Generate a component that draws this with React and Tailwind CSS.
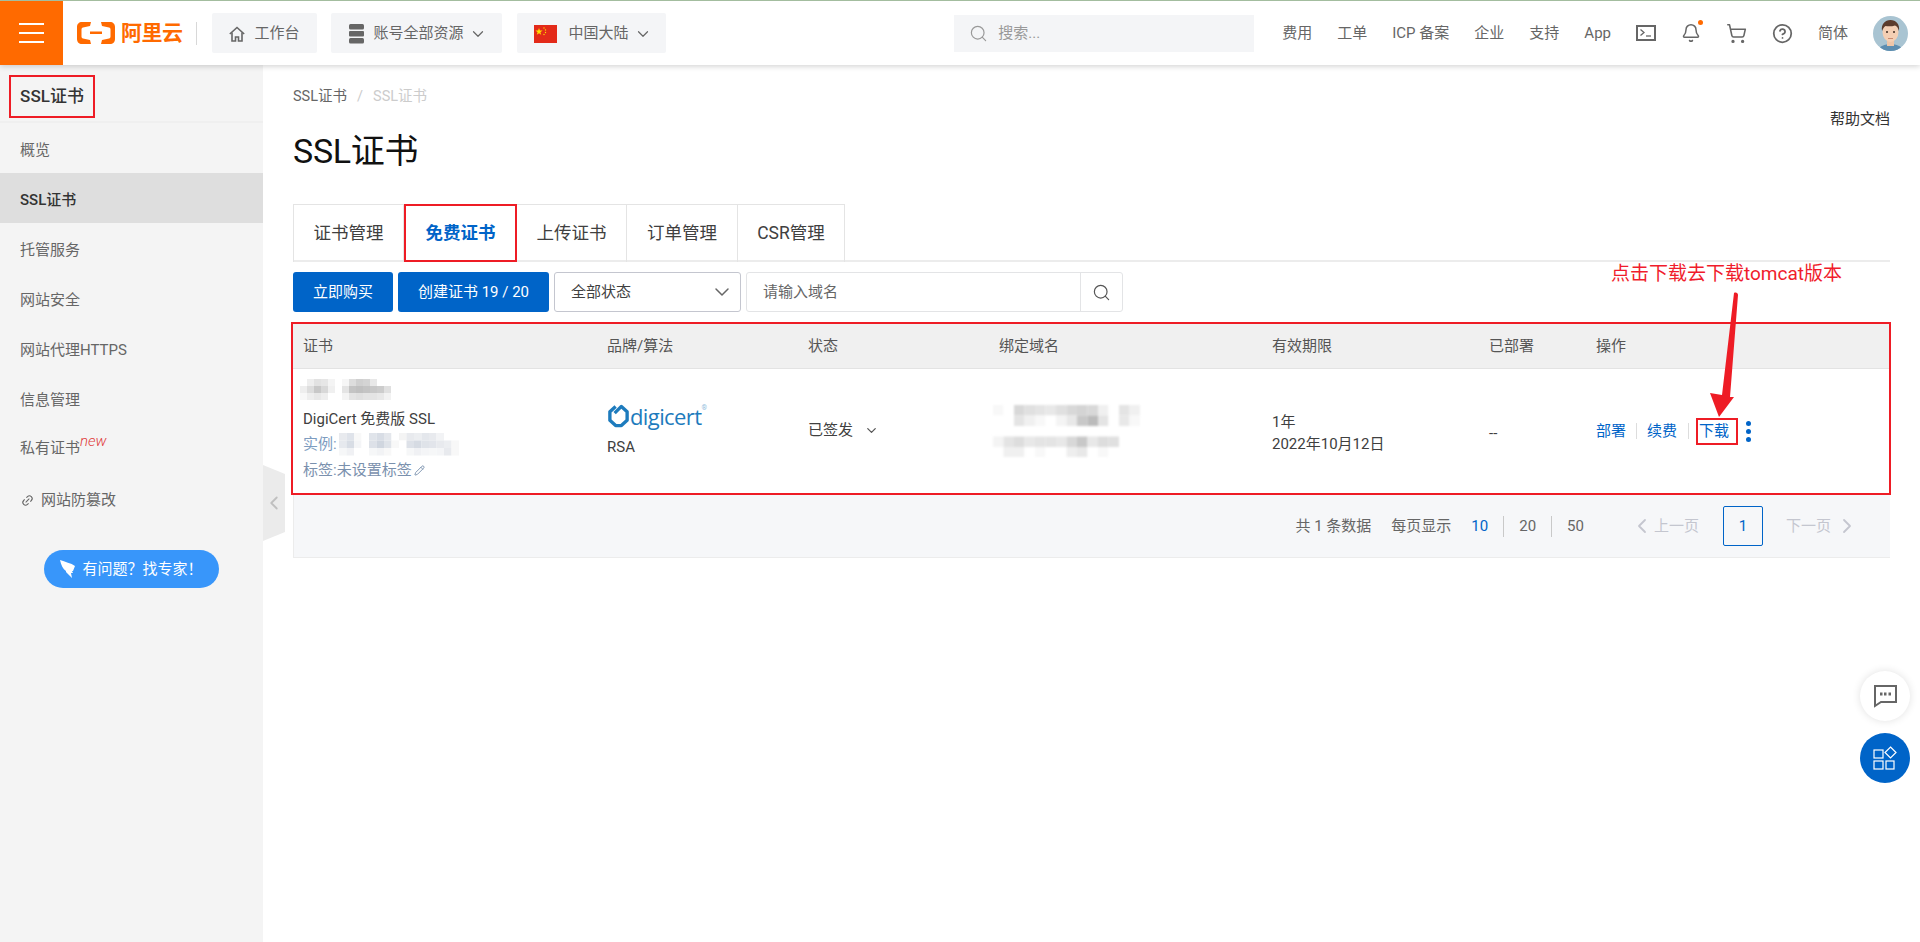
// App.jsx - SSL证书 控制台页面
import React from 'react';
import { Search, ChevronDown, ChevronLeft, ChevronRight, Bell, ShoppingCart, CircleHelp, Link2, Pencil } from 'lucide-react';

const sideItems = ['概览', 'SSL证书', '托管服务', '网站安全', '网站代理HTTPS', '信息管理'];
const navLinks = ['费用', '工单', 'ICP 备案', '企业', '支持', 'App'];
const tabs = [
  { label: '证书管理', width: 'w-[111px]' },
  { label: '免费证书', width: 'w-[113px]', active: true },
  { label: '上传证书', width: 'w-[110px]' },
  { label: '订单管理', width: 'w-[111px]' },
  { label: 'CSR管理', width: 'w-[107px]' },
];
const columns = ['证书', '品牌/算法', '状态', '绑定域名', '有效期限', '已部署', '操作'];

// 打码区域: 每行一串灰度
const nameCells = [
  'fff,eee,e2e2e2,e6e6e6,f4f4f4,fff,f6f6f6,ddd,d0d0d0,d4d4d4,e8e8e8,fff,fff',
  'eee,ddd,c8c8c8,d8d8d8,f0f0f0,fff,e4e4e4,c4c4c4,c0c0c0,c4c4c4,c8c8c8,ccc,e0e0e0',
  'f8f8f8,eee,e8e8e8,eee,fff,fff,f4f4f4,e4e4e4,e0e0e0,e4e4e4,e4e4e4,e8e8e8,f2f2f2',
];
const instanceCells = [
  'e8eaee,dfe3ea,f8f8f8,fff,e0e4ea,d8dde5,e4e7ec,fff,f4f4f4,e8eaee,eceef1,e4e7ec,e8eaee,f2f3f5,fff,fff',
  'e6e9ee,d8dde5,f4f5f7,fff,dde1e8,d0d6df,dfe3e9,f8f8f8,fff,dde1e8,d6dbe3,dfe3e9,e2e5eb,e8eaee,eceef1,f8f8f8',
  'f6f7f8,f0f1f4,fff,fff,f6f7f8,f2f3f5,f8f8f8,fff,fff,f6f7f8,f0f1f4,f4f5f7,f6f7f8,f4f5f7,e8eaee,f8f8f8',
];
const domainCells = [
  'f8f8f8,fff,d8d8d8,e0e0e0,e4e4e4,e8e8e8,e0e0e0,d8d8d8,d4d4d4,d8d8d8,f0f0f0,fff,e4e4e4,f0f0f0',
  'fff,fff,e4e4e4,f0f0f0,f8f8f8,fff,f4f4f4,e8e8e8,c8c8c8,bbb,e4e4e4,fff,e8e8e8,f8f8f8',
  'fff,fff,fff,fff,fff,fff,fff,fff,fff,fff,fff,fff,fff,fff',
  'f4f4f4,e4e4e4,ddd,e8e8e8,e4e4e4,e4e4e4,e8e8e8,d8d8d8,c8c8c8,e8e8e8,ddd,e0e0e0,fff,fff',
  'fff,f0f0f0,f0f0f0,fff,f8f8f8,fff,fff,eee,e8e8e8,fff,f8f8f8,fff,fff,fff',
];

function Mosaic({ rows, cell = 7, className }) {
  const grid = rows.map((r) => r.split(','));
  return (
    <svg width={grid[0].length * cell} height={grid.length * cell} className={className}>
      {grid.map((row, y) =>
        row.map((c, x) => (
          <rect key={`${x}-${y}`} x={x * cell} y={y * cell} width={cell} height={cell} fill={`#${c}`} />
        ))
      )}
    </svg>
  );
}

function AliLogo() {
  return (
    <div className="flex items-center">
      <svg width="38" height="24" viewBox="0 0 38 24" fill="#ff6a00">
        <path d="M5 1h9l-1 4-7 1.500c-1 .3-1.500 1-1.500 2v7c0 1 .5 1.700 1.500 2l7 1.500 1 4H5c-3 0-5-2-5-5V6c0-3 2-5 5-5z" />
        <path d="M33 1h-9l1 4 7 1.500c1 .3 1.500 1 1.500 2v7c0 1-.5 1.700-1.500 2l-7 1.500-1 4h9c3 0 5-2 5-5V6c0-3-2-5-5-5z" />
        <rect x="13" y="10.500" width="12" height="2.500" />
      </svg>
      <span className="ml-[6px] text-[21px] leading-none font-bold text-[#ff6a00] tracking-[-0.5px]">阿里云</span>
    </div>
  );
}

function HomeIcon() {
  return (
    <svg width="16" height="16" viewBox="0 0 16 16" fill="none" stroke="#666" strokeWidth="1.600">
      <path d="M.8 8 8 1.500 15.200 8" />
      <path d="M3 6.500V15h3.500v-4h3v4H13V6.500" />
    </svg>
  );
}

function ServerIcon() {
  return (
    <svg width="15" height="20" viewBox="0 0 15 20" fill="#666">
      <rect width="15" height="5.500" rx="1.500" />
      <rect y="7" width="15" height="5.500" rx="1" />
      <rect y="14" width="15" height="5.500" rx="1.500" />
    </svg>
  );
}

function Flag() {
  return (
    <svg width="23" height="18" viewBox="0 0 23 18">
      <rect width="23" height="18" fill="#e32a19" />
      <path d="m5 3 .9 2.600h2.700L6.400 7.200l.8 2.600L5 8.200 2.800 9.800l.8-2.600-2.200-1.600h2.700z" fill="#ffde00" />
      <circle cx="10" cy="3" r=".7" fill="#ffde00" />
      <circle cx="11.500" cy="5" r=".7" fill="#ffde00" />
      <circle cx="11.500" cy="7.500" r=".7" fill="#ffde00" />
      <circle cx="10" cy="9.500" r=".7" fill="#ffde00" />
    </svg>
  );
}

function TerminalIcon() {
  return (
    <svg width="20" height="16" viewBox="0 0 20 16" fill="none" stroke="#666">
      <rect x="1" y="1" width="18" height="14" strokeWidth="2" />
      <path d="m4.500 4.500 3.500 3-3.500 3" strokeWidth="1.300" />
      <path d="M10 11h5" strokeWidth="1.300" />
    </svg>
  );
}

function Avatar() {
  return (
    <svg width="35" height="35" viewBox="0 0 35 35" className="rounded-full">
      <rect width="35" height="35" fill="#a9c4d2" />
      <path d="M5 35c1-5 7-7 12.500-7s11.500 2 12.500 7z" fill="#5d8db0" />
      <rect x="14" y="23" width="7" height="7" fill="#eec5a8" />
      <ellipse cx="17.500" cy="16" rx="8" ry="10" fill="#f4cfb4" />
      <path d="M9 15c-1-7 3-11 8.500-11S27 8 26 15c-1-3-2-5-4-5.500-3 1-7 1-9.500.500-2 1-2.500 3-3.500 5z" fill="#5b3b2c" />
      <circle cx="14" cy="16" r="1" fill="#3c2a20" />
      <circle cx="21" cy="16" r="1" fill="#3c2a20" />
      <path d="M15 22.500h5" stroke="#c98a70" />
    </svg>
  );
}

function DigicertLogo() {
  return (
    <div className="flex items-center text-[#1d7bbd]">
      <svg width="23" height="24" viewBox="0 0 24 24" fill="none" stroke="#1d7bbd" strokeWidth="3.500">
        <path d="M9 2 3 7.500v9L9 22h6l6-5.500v-9L15 2 8 9" strokeLinejoin="round" />
      </svg>
      <span className="text-[22px] leading-none font-['Open_Sans',sans-serif] tracking-[-0.6px]">digicert</span>
      <span className="self-start -mt-[1px] text-[7px] text-[#8fbcdc]">®</span>
    </div>
  );
}

export default function App() {
  return (
    <div className="relative h-[942px] overflow-hidden bg-white font-['Roboto','Noto_Sans_CJK_SC',sans-serif] text-[15px] text-[#404040]">
      {/* 顶部导航 */}
      <header className="relative z-10 flex h-[65px] items-center border-t border-t-[#a3bd9f] bg-white pr-[12px] shadow-[0_1px_6px_rgba(0,0,0,0.2)]">
        <button className="flex h-full w-[63px] flex-col items-center justify-center gap-[7px] bg-[#ff6a00]">
          <span className="h-[2px] w-[25px] bg-white" />
          <span className="h-[2px] w-[25px] bg-white" />
          <span className="h-[2px] w-[25px] bg-white" />
        </button>
        <div className="ml-[14px]">
          <AliLogo />
        </div>
        <div className="ml-[13px] mr-[15px] h-[23px] w-px bg-[#d8d8d8]" />
        <div className="flex h-[40px] w-[105px] items-center gap-[10px] rounded-[2px] bg-[#f4f5f7] pl-[17px] pt-[1px] text-[#666]">
          <HomeIcon />
          工作台
        </div>
        <div className="ml-[14px] flex h-[40px] w-[171px] items-center rounded-[2px] bg-[#f4f5f7] pl-[18px] pt-[1px] text-[#666]">
          <ServerIcon />
          <span className="ml-[10px]">账号全部资源</span>
          <ChevronDown className="ml-[5px] h-[18px] w-[18px]" strokeWidth={1.6} />
        </div>
        <div className="ml-[15px] flex h-[40px] w-[149px] items-center rounded-[2px] bg-[#f4f5f7] pl-[17px] pt-[1px] text-[#666]">
          <Flag />
          <span className="ml-[12px]">中国大陆</span>
          <ChevronDown className="ml-[5px] h-[18px] w-[18px]" strokeWidth={1.6} />
        </div>

        <div className="ml-auto mr-[28px] flex h-[37px] w-[300px] items-center gap-[10px] bg-[#f4f5f7] pl-[15px] text-[#999]">
          <Search className="h-[19px] w-[19px]" strokeWidth={1.5} />
          搜索...
        </div>
        <nav className="flex items-center gap-[25px] text-[#666]">
          {navLinks.map((link) => (
            <a key={link} className="whitespace-nowrap">{link}</a>
          ))}
          <TerminalIcon />
          <span className="relative">
            <Bell className="h-[20px] w-[20px]" strokeWidth={1.8} />
            <span className="absolute -top-[3px] -right-[2px] h-[5px] w-[5px] rounded-full bg-[#ff6a00]" />
          </span>
          <ShoppingCart className="h-[21px] w-[21px]" strokeWidth={1.8} />
          <CircleHelp className="h-[21px] w-[21px]" strokeWidth={2} />
          <a>简体</a>
          <Avatar />
        </nav>
      </header>

      <div className="relative flex h-[877px]">
        {/* 左侧菜单 */}
        <aside className="w-[263px] shrink-0 bg-[#f4f4f4] text-[#666]">
          <div className="h-[58px] border-b-2 border-[#efefef] pl-[9px] pt-[10px]">
            <div className="flex h-[43px] w-[86px] items-center justify-center border-2 border-[#ee1c25] pt-[1px] text-[17px] font-medium text-[#333]">
              SSL证书
            </div>
          </div>
          <ul>
            {sideItems.map((item) => (
              <li
                key={item}
                className={`flex h-[50px] items-center pl-[20px] pt-[5px] ${item === 'SSL证书' ? 'bg-[#dedede] font-medium text-[#333]' : ''}`}
              >
                {item}
              </li>
            ))}
            <li className="flex h-[46px] items-center pl-[20px] pt-[4px]">
              私有证书
              <span className="-mt-[14px] text-[15px] font-light italic text-[#e03a3a]">new</span>
            </li>
            <li className="flex h-[54px] items-center pl-[21px] pt-[9px]">
              <Link2 className="mr-[7px] h-[13px] w-[13px] -rotate-45" />
              网站防篡改
            </li>
          </ul>
          <div className="ml-[44px] mt-[27px] flex h-[38px] w-[175px] items-center justify-center gap-[7px] rounded-full bg-[#3896fa] text-white">
            <svg width="15" height="18" viewBox="0 0 15 18" fill="#fff">
              <path d="M0 0c5 2 11 3 15 6l-2 5-1 0 1 2-2 0 1 5-6-6 0-1C3 9 1 5 0 0z" />
            </svg>
            有问题？找专家！
          </div>
        </aside>

        {/* 收起菜单 */}
        <div className="absolute left-[263px] top-[400px] flex h-[76px] w-[22px] items-center justify-center bg-[#ebebeb] [clip-path:polygon(0_0,100%_12%,100%_88%,0_100%)]">
          <ChevronLeft className="h-[24px] w-[24px] text-[#c0c0c0]" />
        </div>

        {/* 主内容 */}
        <main className="flex-1 px-[30px]">
          <div className="flex justify-between">
            <div>
              <div className="mt-[21px] flex h-[22px] items-center gap-[10px] text-[14.500px] text-[#666]">
                SSL证书
                <span className="text-[#ccc]">/</span>
                <span className="text-[#ccc]">SSL证书</span>
              </div>
              <h1 className="mt-[18px] text-[34px] leading-[50px] font-normal tracking-[-0.3px] text-[#111]">SSL证书</h1>
            </div>
            <a className="mt-[43px] text-[#333]">帮助文档</a>
          </div>

          {/* 选项卡 */}
          <div className="mt-[28px] flex h-[58px] border-b-2 border-[#ececec]">
            {tabs.map((tab) => (
              <div
                key={tab.label}
                className={`flex h-[58px] items-center justify-center text-[17.500px] ${tab.width} ${
                  tab.active
                    ? 'border-2 border-[#ee1c25] font-bold text-[#0064c8]'
                    : 'border-r border-t border-[#e4e4e4] first:border-l'
                }`}
              >
                {tab.label}
              </div>
            ))}
          </div>

          {/* 工具栏 */}
          <div className="mt-[10px] flex h-[40px] gap-[5px]">
            <button className="w-[100px] rounded-[3px] bg-[#0064c8] text-white">立即购买</button>
            <button className="w-[151px] rounded-[3px] bg-[#0064c8] text-white">创建证书 19 / 20</button>
            <div className="flex w-[187px] items-center justify-between rounded-[3px] border border-[#c4c6cf] pl-[16px] pr-[6px]">
              全部状态
              <ChevronDown className="h-[24px] w-[24px] text-[#666]" strokeWidth={1.5} />
            </div>
            <div className="flex w-[377px] items-center rounded-[3px] border border-[#e3e4e6]">
              <span className="flex-1 pl-[16px] text-[#666]">请输入域名</span>
              <span className="flex h-full w-[42px] items-center justify-center border-l border-[#e3e4e6]">
                <Search className="h-[19px] w-[19px] text-[#555]" strokeWidth={1.5} />
              </span>
            </div>
          </div>

          {/* 证书表格 */}
          <div className="-mx-[2px] mt-[10px] h-[173px] w-[1600px] border-2 border-[#ee1c25]">
            <div className="grid h-[45px] grid-cols-[304px_201px_191px_273px_217px_107px_1fr] items-center border-b border-[#e3e3e3] bg-[#f0f0f0] pt-[1px] text-[#555]">
              {columns.map((col) => (
                <div key={col} className="pl-[10px]">{col}</div>
              ))}
            </div>
            <div className="grid h-[124px] grid-cols-[304px_201px_191px_273px_217px_107px_1fr]">
              <div className="flex flex-col justify-center pl-[7px]">
                <Mosaic rows={nameCells} cell={7} className="blur-[0.6px]" />
                <div className="mt-[7px] pl-[3px] leading-[25px]">DigiCert 免费版 SSL</div>
                <div className="flex items-center pl-[3px] leading-[25px] text-[#7d9cc0]">
                  实例:
                  <Mosaic rows={instanceCells} cell={7.5} className="ml-[2px] blur-[0.6px]" />
                </div>
                <div className="flex items-center pl-[3px] leading-[26px] text-[#7a90ad]">
                  标签:未设置标签
                  <Pencil className="ml-[2px] h-[11px] w-[11px]" />
                </div>
              </div>
              <div className="flex flex-col justify-center pl-[10px]">
                <DigicertLogo />
                <div className="mt-[8px]">RSA</div>
              </div>
              <div className="flex items-center pl-[10px] pb-[2px]">
                已签发
                <ChevronDown className="ml-[11px] h-[15px] w-[15px] text-[#555]" />
              </div>
              <div className="flex items-center pl-[4px]">
                <Mosaic rows={domainCells} cell={10.500} className="blur-[0.8px]" />
              </div>
              <div className="flex flex-col justify-center pl-[10px] pt-[3px] leading-[22px]">
                <span>1年</span>
                <span>2022年10月12日</span>
              </div>
              <div className="flex items-center pl-[10px] pt-[5px]">--</div>
              <div className="flex items-center pl-[10px] text-[#0064c8]">
                <a>部署</a>
                <span className="mx-[10px] h-[16px] w-px bg-[#ddd]" />
                <a>续费</a>
                <span className="ml-[11px] mr-[7px] h-[16px] w-px bg-[#ddd]" />
                <a className="flex h-[27px] w-[42px] items-center border-2 border-[#ee1c25] pl-[1px]">下载</a>
                <span className="ml-[8px] flex flex-col gap-[3px]">
                  <span className="h-[5px] w-[5px] rounded-full bg-[#0064c8]" />
                  <span className="h-[5px] w-[5px] rounded-full bg-[#0064c8]" />
                  <span className="h-[5px] w-[5px] rounded-full bg-[#0064c8]" />
                </span>
              </div>
            </div>
          </div>

          {/* 分页 */}
          <div className="flex h-[63px] items-center justify-end border-b border-l border-[#ececec] bg-[#f6f7f9] pr-[33px] text-[#666]">
            <span>共 1 条数据</span>
            <span className="ml-[20px]">每页显示</span>
            <span className="ml-[20px] text-[#0064c8]">10</span>
            <span className="ml-[15px] h-[21px] w-px bg-[#c9c9c9]" />
            <span className="ml-[15px]">20</span>
            <span className="ml-[15px] h-[21px] w-px bg-[#c9c9c9]" />
            <span className="ml-[15px]">50</span>
            <span className="ml-[48px] flex items-center text-[#c4c6cf]">
              <ChevronLeft className="-ml-[2px] h-[24px] w-[24px]" strokeWidth={1.8} />
              上一页
            </span>
            <span className="ml-[24px] flex h-[40px] w-[40px] items-center justify-center rounded-[2px] border border-[#0064c8] text-[#0064c8]">1</span>
            <span className="ml-[23px] flex items-center gap-[4px] text-[#c4c6cf]">
              下一页
              <ChevronRight className="-mr-[2px] h-[24px] w-[24px]" strokeWidth={1.8} />
            </span>
          </div>
        </main>
      </div>

      {/* 标注文字和箭头 */}
      <div className="absolute left-[1611px] top-[261px] text-[19px] leading-[26px] whitespace-nowrap text-[#f01c2c]">点击下载去下载tomcat版本</div>
      <svg className="absolute left-[1700px] top-[285px]" width="50" height="140" viewBox="0 0 50 140" fill="#ee1c25">
        <path d="M34 8c2-1 4 0 4 2L30 112l4 0-15 20-9-24 12 2L34 8z" />
      </svg>

      {/* 右侧悬浮按钮 */}
      <div className="absolute left-[1860px] top-[671px] flex h-[50px] w-[50px] items-center justify-center rounded-full bg-white shadow-[0_0_8px_rgba(0,0,0,0.12)]">
        <svg width="24" height="24" viewBox="0 0 24 24" fill="none" stroke="#666" strokeWidth="2">
          <path d="M2 2h21v16H8l-6 4z" />
          <path d="M7 10h2.500M11 10h2.500M15.500 10H18" strokeWidth="3" />
        </svg>
      </div>
      <div className="absolute left-[1860px] top-[733px] flex h-[50px] w-[50px] items-center justify-center rounded-full bg-[#0064c8]">
        <svg width="24" height="24" viewBox="0 0 24 24" fill="none" stroke="#fff" strokeWidth="1.200">
          <rect x="1" y="4" width="9" height="8" />
          <rect x="1" y="15" width="9" height="8" />
          <rect x="13" y="15" width="8" height="8" />
          <path d="m17.500 1 5.500 5.500-5.500 5.500L12 6.500z" />
        </svg>
      </div>
    </div>
  );
}
